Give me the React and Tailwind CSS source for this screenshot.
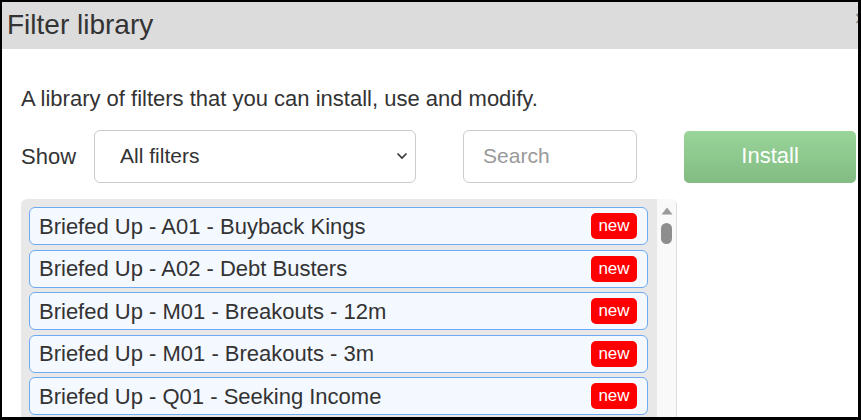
import React from 'react';

const filters = [
  'Briefed Up - A01 - Buyback Kings',
  'Briefed Up - A02 - Debt Busters',
  'Briefed Up - M01 - Breakouts - 12m',
  'Briefed Up - M01 - Breakouts - 3m',
  'Briefed Up - Q01 - Seeking Income',
];

const FilterRow = ({ name }) => (
  <div className="flex h-[38px] shrink-0 items-center justify-between rounded-[6px] border border-[#6eaaf2] bg-[#f4f8ff] pl-[9px] pr-[10px]">
    <span className="text-[22px] text-[#333]">{name}</span>
    <span className="flex h-[26px] w-[46px] items-center justify-center rounded-[5px] bg-[#ff0000] text-[17px] text-white">
      new
    </span>
  </div>
);

export default function App() {
  return (
    <div
      className="h-[420px] w-[861px] overflow-hidden bg-black pb-[3px] pl-[2px] pr-[3px] pt-[2px]"
      style={{ fontFamily: '"Liberation Sans", Arial, sans-serif' }}
    >
      <div className="relative flex h-full flex-col overflow-hidden bg-white">
        {/* header */}
        <div className="flex h-[47px] shrink-0 items-center bg-[#dcdcdc] pb-[2px] pl-[5px]">
          <h1 className="text-[28px] leading-none text-[#333]">Filter library</h1>
          <span className="absolute right-[-9px] top-[6px] text-[22px] leading-none text-[#888]">×</span>
        </div>

        {/* body */}
        <div className="flex flex-col pl-[19px]">
          <p className="mt-[37px] text-[22px] leading-[26px] text-[#333]">
            A library of filters that you can install, use and modify.
          </p>

          <div className="mt-[18px] flex items-center">
            <span className="mr-[18px] shrink-0 text-[22px] text-[#333]">Show</span>
            <div className="flex h-[53px] w-[322px] shrink-0 items-center justify-between rounded-[6px] border border-[#cccccc] bg-white pb-[1px] pl-[25px] pr-[7px]">
              <span className="text-[21px] text-[#333]">All filters</span>
              <svg width="12" height="8" viewBox="0 0 12 8" fill="none">
                <path d="M1.5 1.5 L6 6 L10.5 1.5" stroke="#333" strokeWidth="1.6" />
              </svg>
            </div>
            <input
              placeholder="Search"
              className="ml-[47px] h-[53px] w-[174px] shrink-0 rounded-[6px] border border-[#cccccc] bg-white pb-[2px] pl-[19px] text-[21px] text-[#333] outline-none placeholder:text-[#999]"
            />
            <button className="ml-[47px] h-[52px] w-[172px] shrink-0 rounded-[5px] bg-gradient-to-b from-[#99d499] to-[#82bc82] pb-[2px] text-[22px] text-white">
              Install
            </button>
          </div>

          {/* list */}
          <div className="mt-[16px] flex w-[656px] overflow-hidden rounded-t-[6px] bg-[#e8e8e8]">
            <div className="flex flex-1 flex-col gap-[4.5px] pb-[8px] pl-[8px] pr-[9px] pt-[8px]">
              {filters.map((f) => (
                <FilterRow key={f} name={f} />
              ))}
            </div>
            <div className="flex w-[20px] flex-col items-center border-r border-[#dddddd] bg-[#f9f9f9] pt-[8px]">
              <svg width="12" height="8" viewBox="0 0 12 8">
                <path d="M6 0.5 L11.5 7.5 L0.5 7.5 Z" fill="#9a9a9a" />
              </svg>
              <div className="mt-[8px] h-[21px] w-[11px] rounded-full bg-[#8e8e8e]" />
            </div>
          </div>
        </div>
      </div>
    </div>
  );
}
